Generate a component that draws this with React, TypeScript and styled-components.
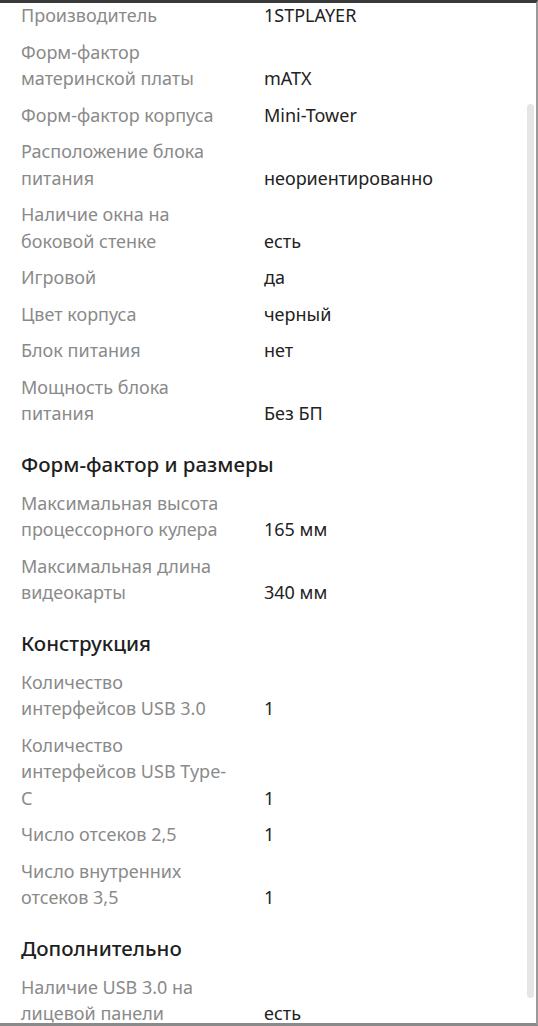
import React from 'react';
import styled, { createGlobalStyle } from 'styled-components';

const GlobalStyle = createGlobalStyle`
  html, body {
    margin: 0;
    padding: 0;
    background: #fff;
  }
`;

type Spec = {
  label: string
  value: string
}

type Group = {
  title?: string
  specs: Spec[]
}

const groups: Group[] = [
  {
    specs: [
      {label: 'Производитель', value: '1STPLAYER'},
      {label: 'Форм-фактор материнской платы', value: 'mATX'},
      {label: 'Форм-фактор корпуса', value: 'Mini-Tower'},
      {label: 'Расположение блока питания', value: 'неориентированно'},
      {label: 'Наличие окна на боковой стенке', value: 'есть'},
      {label: 'Игровой', value: 'да'},
      {label: 'Цвет корпуса', value: 'черный'},
      {label: 'Блок питания', value: 'нет'},
      {label: 'Мощность блока питания', value: 'Без БП'},
    ]
  },
  {
    title: 'Форм-фактор и размеры',
    specs: [
      {label: 'Максимальная высота процессорного кулера', value: '165 мм'},
      {label: 'Максимальная длина видеокарты', value: '340 мм'},
    ]
  },
  {
    title: 'Конструкция',
    specs: [
      {label: 'Количество интерфейсов USB 3.0', value: '1'},
      {label: 'Количество интерфейсов USB Type-C', value: '1'},
      {label: 'Число отсеков 2,5', value: '1'},
      {label: 'Число внутренних отсеков 3,5', value: '1'},
    ]
  },
  {
    title: 'Дополнительно',
    specs: [
      {label: 'Наличие USB 3.0 на лицевой панели', value: 'есть'},
    ]
  },
];

const Frame = styled.div`
  position: relative;
  box-sizing: border-box;
  width: 538px;
  height: 1026px;
  overflow: hidden;
  border-top: 3px solid #3a3a3a;
  border-right: 2px solid #9a9a9a;
  border-bottom: 3px solid #8a8a8a;
  background: #fff;
  font-family: "Noto Sans", "Open Sans", sans-serif;
`;

const Content = styled.div`
  margin-top: -1px;
  padding: 0 40px 0 21px;
`;

const Section = styled.section`
  display: flex;
  flex-direction: column;
  gap: 10px;
  margin-bottom: 24px;
`;

const SectionTitle = styled.h3`
  margin: 0 0 3px;
  font-size: 20.5px;
  line-height: 26px;
  font-weight: 500;
  color: #1f1f1f;
`;

const Row = styled.div`
  display: flex;
  align-items: flex-end;
`;

const Label = styled.div`
  width: 207px;
  flex-shrink: 0;
  margin-right: 36px;
  font-size: 18px;
  line-height: 26.5px;
  color: #8a8a8a;
`;

const Value = styled.div`
  font-size: 18px;
  line-height: 26.5px;
  color: #222;
`;

const ScrollThumb = styled.div`
  position: absolute;
  top: 101px;
  right: 2px;
  width: 7px;
  height: 894px;
  border-radius: 4px;
  background: #e5e5e5;
`;

export default function App() {
  return (
    <>
      <GlobalStyle/>
      <Frame>
        <Content>
          {groups.map((group, i) => (
            <Section key={i}>
              {group.title && <SectionTitle>{group.title}</SectionTitle>}
              {group.specs.map(spec => (
                <Row key={spec.label}>
                  <Label>{spec.label}</Label>
                  <Value>{spec.value}</Value>
                </Row>
              ))}
            </Section>
          ))}
        </Content>
        <ScrollThumb/>
      </Frame>
    </>
  );
}
